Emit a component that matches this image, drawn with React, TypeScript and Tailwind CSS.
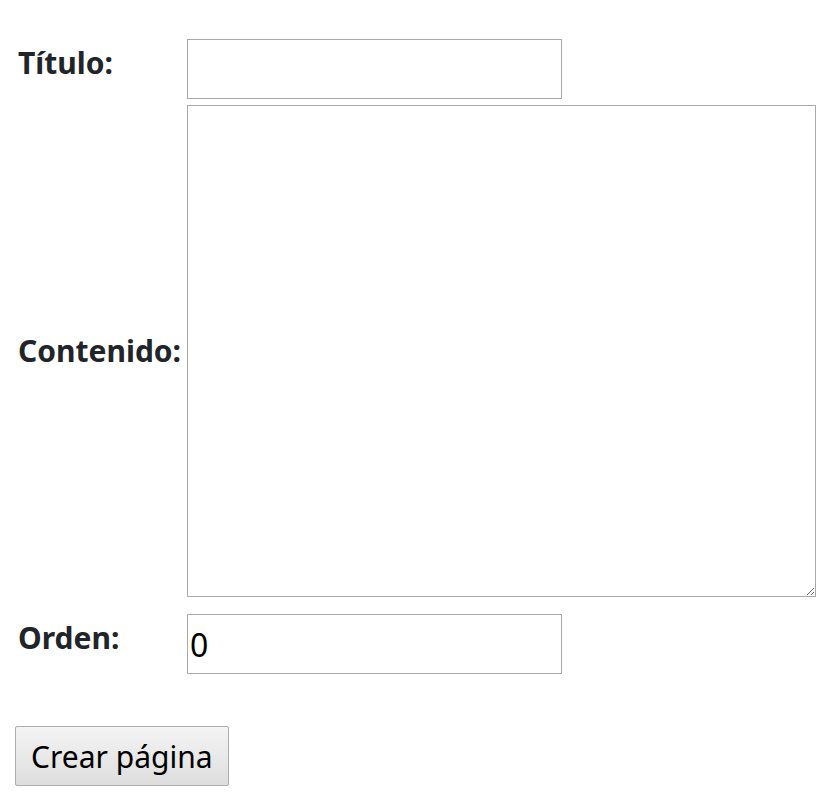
import React from "react";

export default function App() {
  return (
    <div className="min-h-[793px] bg-white pt-[39px] text-[#212529]" style={{ fontFamily: '"Noto Sans", "Open Sans", sans-serif' }}>
      <div className="grid grid-cols-[169px_auto] pl-[18px] w-fit">
        <label className="text-[30px] font-bold leading-[40px] self-center -mt-[12px] whitespace-nowrap">Título:</label>
        <input type="text" className="w-[375px] h-[60px] border border-[#a9a9a9] bg-white px-[2px] text-[32px] text-black outline-none" />
        <label className="text-[30px] font-bold leading-[40px] self-center mt-[6px] whitespace-nowrap">Contenido:</label>
        <textarea className="mt-[6px] w-[629px] h-[492px] border border-[#a9a9a9] bg-white text-[26px] text-black outline-none resize" />
        <label className="text-[30px] font-bold leading-[40px] self-center mt-[5px] whitespace-nowrap">Orden:</label>
        <input type="number" defaultValue={0} className="mt-[17px] w-[375px] h-[60px] border border-[#a9a9a9] bg-white px-[2px] text-[32px] text-black outline-none [appearance:textfield]" />
      </div>
      <div className="pl-[15px] mt-[52px]">
        <button className="h-[60px] px-[15px] border border-[#adadad] bg-gradient-to-b from-[#f4f4f4] to-[#dedede] text-[30px] text-black rounded-[2px] whitespace-nowrap">
          Crear página
        </button>
      </div>
    </div>
  );
}
